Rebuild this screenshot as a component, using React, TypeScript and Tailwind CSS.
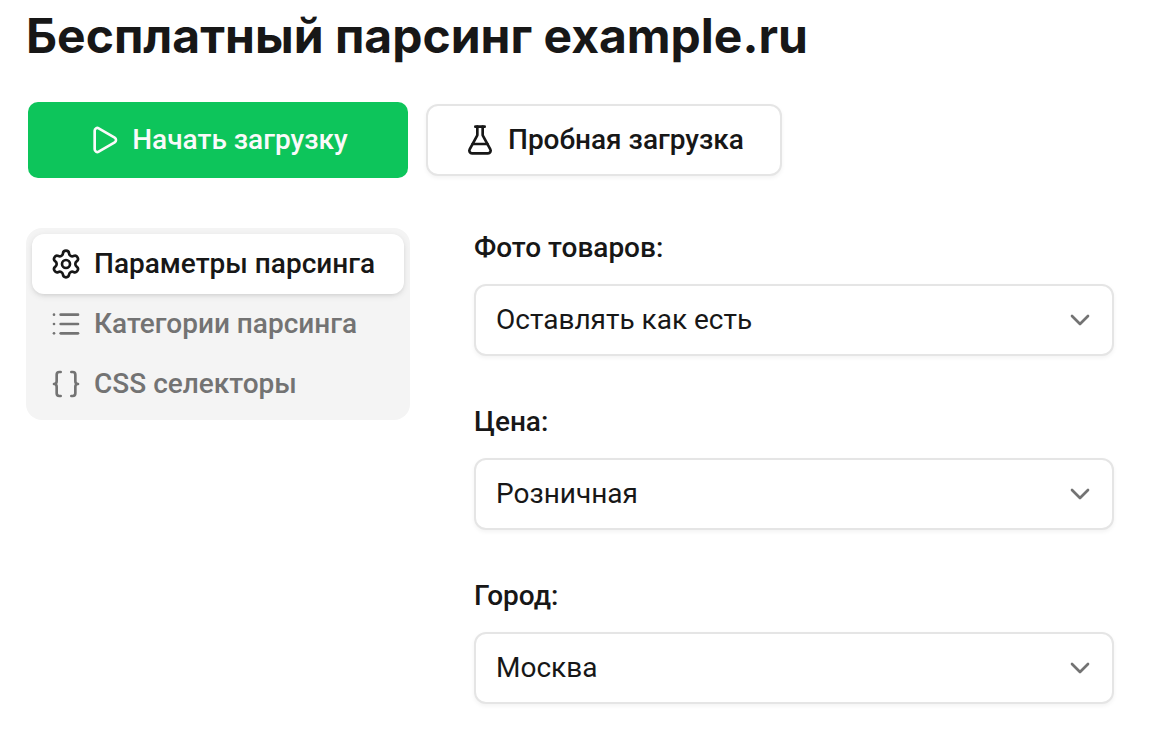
import { Braces, ChevronDown, FlaskConical, List, Play, Settings } from "lucide-react";

const tabs = [
  { label: "Параметры парсинга", icon: Settings },
  { label: "Категории парсинга", icon: List },
  { label: "CSS селекторы", icon: Braces },
];

export default function App() {
  return (
    <main className="bg-white px-[26px] pt-3 pb-12 font-['Roboto',sans-serif] text-[28px] leading-10 text-neutral-900">
      <h1 className="font-['Inter',sans-serif] text-5xl leading-[48px] font-bold">
        Бесплатный парсинг example.ru
      </h1>

      <div className="mt-[42px] flex items-center gap-[18px] pl-[2px]">
        <button
          type="button"
          className="flex h-[76px] w-[380px] items-center justify-center gap-3 rounded-[10px] bg-[#0dc55b] font-medium text-neutral-50"
        >
          <Play className="h-8 w-8" />
          Начать загрузку
        </button>
        <button
          type="button"
          className="flex h-[72px] items-center gap-3 rounded-xl border-2 border-neutral-200 bg-white px-9 font-medium shadow-[0_2px_4px_rgba(0,0,0,0.05)]"
        >
          <FlaskConical className="h-8 w-8" />
          Пробная загрузка
        </button>
      </div>

      <div className="mt-[50px] flex items-start gap-16">
        <nav className="flex w-96 shrink-0 flex-col rounded-2xl bg-[#f4f4f4] p-[6px]">
          {tabs.map(({ label, icon: Icon }, i) => (
            <button
              key={label}
              type="button"
              className={
                i === 0
                  ? "flex h-[60px] items-center gap-3 rounded-xl bg-white px-[18px] font-medium shadow-[0_2px_6px_rgba(0,0,0,0.1),0_2px_4px_-2px_rgba(0,0,0,0.1)]"
                  : "flex h-[60px] items-center gap-3 rounded-xl px-[18px] font-medium text-neutral-500"
              }
            >
              <Icon className="h-8 w-8" />
              {label}
            </button>
          ))}
        </nav>

        <form className="flex flex-1 flex-col gap-[46px] pr-[34px]">
          <SelectField id="photos" label="Фото товаров:" value="Оставлять как есть" />
          <SelectField id="price" label="Цена:" value="Розничная" />
          <SelectField id="city" label="Город:" value="Москва" />
        </form>
      </div>
    </main>
  );
}

function SelectField({ id, label, value }: { id: string; label: string; value: string }) {
  return (
    <div className="flex flex-col gap-4">
      <label htmlFor={id} className="font-medium">{label}</label>
      <div className="relative">
        <select
          id={id}
          className="block h-[72px] w-full appearance-none rounded-xl border-2 border-neutral-200 bg-white pr-16 pl-5 shadow-[0_2px_4px_rgba(0,0,0,0.05)]"
        >
          <option>{value}</option>
        </select>
        <ChevronDown className="pointer-events-none absolute top-5 right-[18px] h-8 w-8 text-neutral-500" />
      </div>
    </div>
  );
}
